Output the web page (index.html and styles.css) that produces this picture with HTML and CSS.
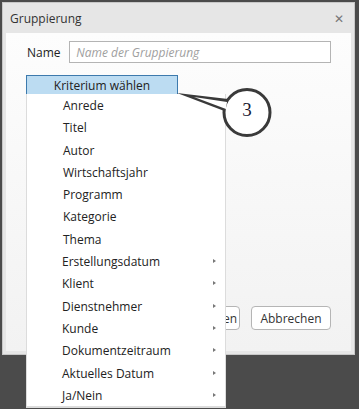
FILE: index.html
```html
<!DOCTYPE html>
<html lang="de">
  <head>
    <meta charset="UTF-8" />
    <title>Gruppierung</title>
    <link rel="stylesheet" href="styles.css">
  </head>
  <body>
    <div class="window">
      <div class="titlebar">
        <span class="title">Gruppierung</span>
        <span class="close">&#x2715;</span>
      </div>
      <div class="content">
        <div class="name-row">
          <label for="name">Name</label>
          <input type="text" id="name" placeholder="Name der Gruppierung" />
        </div>
        <div class="criteria">
          <button class="criteria-btn">Kriterium wählen</button>
        </div>
        <div class="spacer"></div>
        <div class="footer">
          <button class="btn">Übernehmen</button>
          <button class="btn">Abbrechen</button>
        </div>
      </div>
    </div>

    <!-- popup menu of the criteria button -->
    <ul class="menu">
      <li>Anrede</li>
      <li>Titel</li>
      <li>Autor</li>
      <li>Wirtschaftsjahr</li>
      <li>Programm</li>
      <li>Kategorie</li>
      <li>Thema</li>
      <li class="sub">Erstellungsdatum</li>
      <li class="sub">Klient</li>
      <li class="sub">Dienstnehmer</li>
      <li class="sub">Kunde</li>
      <li class="sub">Dokumentzeitraum</li>
      <li class="sub">Aktuelles Datum</li>
      <li class="sub">Ja/Nein</li>
    </ul>

    <!-- numbered callout -->
    <div class="callout">
      <svg width="110" height="62" viewBox="0 0 110 62">
        <polygon points="7,9 58,15 57,28" fill="#3a3a3a" />
        <circle cx="77" cy="28.5" r="23" fill="#fff" stroke="#3a3a3a" stroke-width="3" />
        <polygon points="24,13 57,18 56,25" fill="#fff" />
      </svg>
      <span class="callout-num">3</span>
    </div>
  </body>
</html>
```

FILE: styles.css
```css
body {
    margin: 0;
    background-color: #4b4b4b;
    font-family: "Open Sans", "Noto Sans", sans-serif;
    font-size: 12px;
    color: #222;
}

/* Dialog window */
.window {
    margin: 2px;
    width: 351px;
    height: 351px;
    border: 1px solid #c8c8c8;
    background-color: #e6e6e6;
    display: flex;
    flex-direction: column;
}

.titlebar {
    height: 30px;
    display: flex;
    align-items: center;
    justify-content: space-between;
    padding: 0 10px 0 7px;
    flex-shrink: 0;
}

.title {
    color: #333;
}

.close {
    color: #777;
    font-size: 12px;
}

.content {
    flex: 1;
    margin: 0 3px 3px 3px;
    background: linear-gradient(#fdfdfd, #f2f2f2);
    display: flex;
    flex-direction: column;
    padding: 8px 20px 0 21px;
}

.name-row {
    display: flex;
    align-items: center;
    height: 22px;
}

.name-row label {
    width: 43px;
    color: #222;
}

.name-row input {
    width: 252px;
    height: 20px;
    border: 1px solid #b4b4b4;
    padding: 0 6px;
    font-family: inherit;
    font-size: 12px;
    background-color: #fff;
}

.name-row input::placeholder {
    color: #a0a0a0;
    font-style: italic;
}

.criteria {
    margin-top: 12px;
}

.criteria-btn {
    width: 152px;
    height: 20px;
    margin-left: -1px;
    border: 1px solid #3d7aad;
    background-color: #bcdcf2;
    font-family: inherit;
    font-size: 12px;
    color: #222;
    padding: 0;
}

.spacer {
    flex: 1;
}

.footer {
    display: flex;
    justify-content: flex-end;
    gap: 11px;
    padding-bottom: 21px;
}

.btn {
    width: 80px;
    height: 24px;
    border: 1px solid #b5b5b5;
    border-radius: 4px;
    background-color: #fff;
    font-family: inherit;
    font-size: 12px;
    color: #333;
    padding: 0;
}

/* Popup menu */
.menu {
    position: absolute;
    left: 26px;
    top: 94px;
    width: 198px;
    margin: 0;
    padding: 0;
    list-style: none;
    background-color: #fff;
    border: 1px solid #dcdcdc;
    border-top: none;
    border-bottom-width: 2px;
}

.menu li {
    height: 22.3px;
    line-height: 23px;
    padding-left: 36px;
    position: relative;
}

.menu li.sub {
    padding-left: 35px;
}

.menu li.sub::after {
    content: "";
    position: absolute;
    right: 9px;
    top: 9px;
    border-left: 3px solid #777;
    border-top: 2.5px solid transparent;
    border-bottom: 2.5px solid transparent;
}

/* Callout bubble */
.callout {
    position: absolute;
    left: 170px;
    top: 84px;
    width: 110px;
    height: 62px;
}

.callout svg {
    display: block;
}

.callout-num {
    position: absolute;
    left: 67px;
    top: 15px;
    width: 20px;
    text-align: center;
    font-family: "Liberation Serif", serif;
    font-size: 19px;
    color: #1b1b33;
}
```
